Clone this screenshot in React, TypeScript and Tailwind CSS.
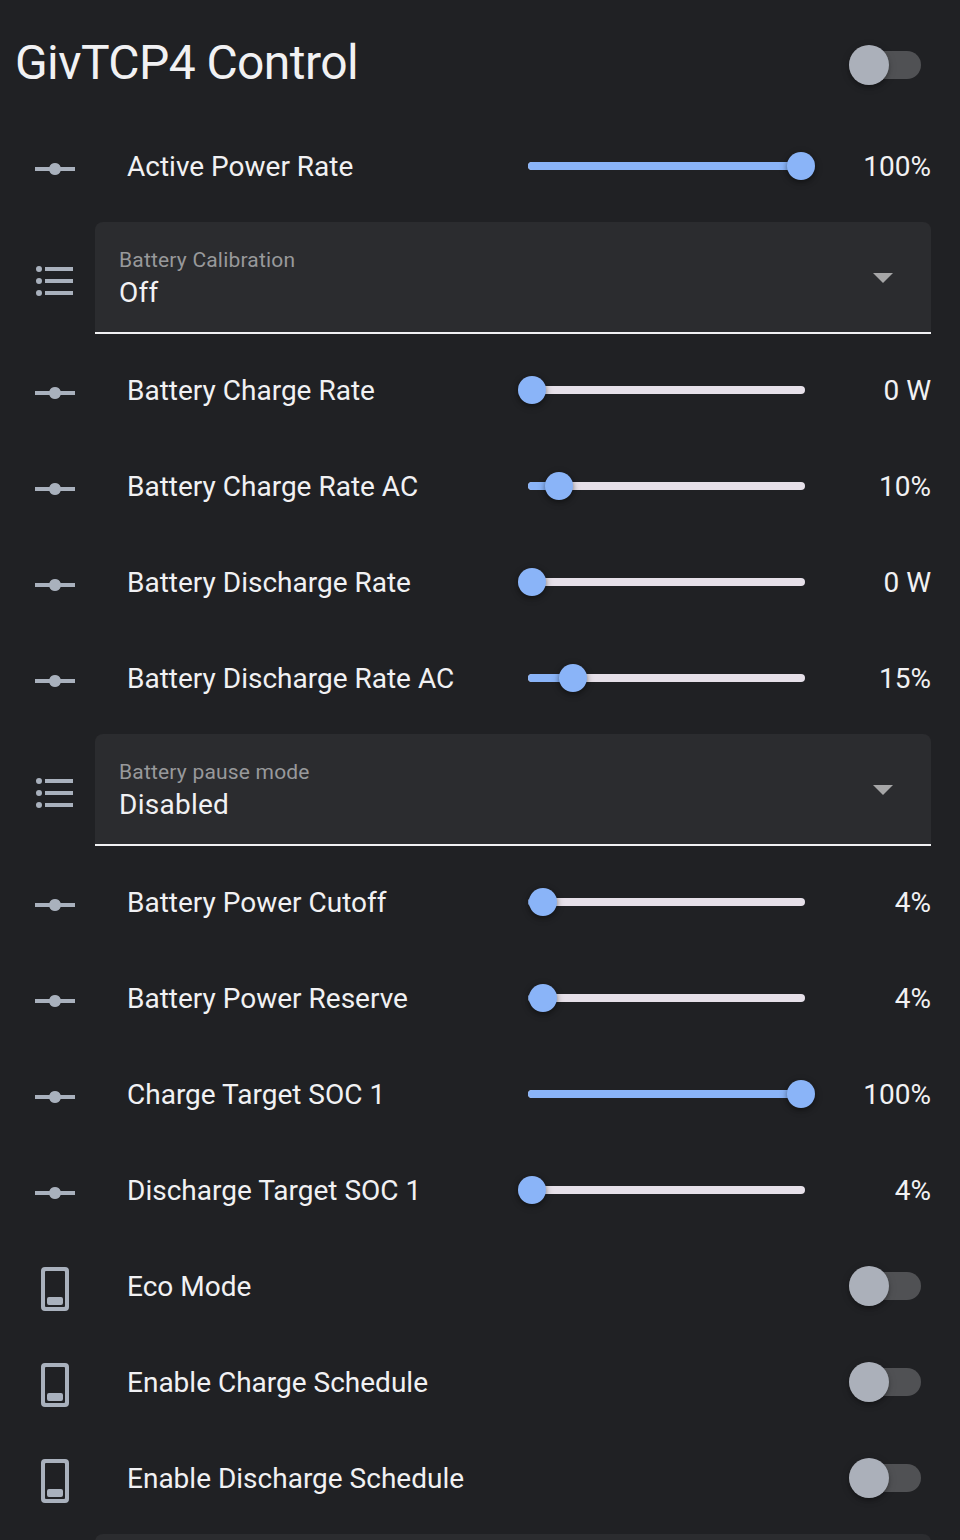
import type { ReactNode } from 'react';

type Row =
  | { kind: 'slider'; name: string; value: string; pos: number }
  | { kind: 'select'; name: string; value: string }
  | { kind: 'switch'; name: string };

const rows: Row[] = [
  { kind: 'slider', name: 'Active Power Rate', value: '100%', pos: 269 },
  { kind: 'select', name: 'Battery Calibration', value: 'Off' },
  { kind: 'slider', name: 'Battery Charge Rate', value: '0 W', pos: 0 },
  { kind: 'slider', name: 'Battery Charge Rate AC', value: '10%', pos: 27 },
  { kind: 'slider', name: 'Battery Discharge Rate', value: '0 W', pos: 0 },
  { kind: 'slider', name: 'Battery Discharge Rate AC', value: '15%', pos: 41 },
  { kind: 'select', name: 'Battery pause mode', value: 'Disabled' },
  { kind: 'slider', name: 'Battery Power Cutoff', value: '4%', pos: 11 },
  { kind: 'slider', name: 'Battery Power Reserve', value: '4%', pos: 11 },
  { kind: 'slider', name: 'Charge Target SOC 1', value: '100%', pos: 269 },
  { kind: 'slider', name: 'Discharge Target SOC 1', value: '4%', pos: 0 },
  { kind: 'switch', name: 'Eco Mode' },
  { kind: 'switch', name: 'Enable Charge Schedule' },
  { kind: 'switch', name: 'Enable Discharge Schedule' },
];

function Icon({ children }: { children: ReactNode }) {
  return (
    <svg viewBox="0 0 24 24" className="mt-1.5 size-12 shrink-0 fill-[#a9b1bd]">
      {children}
    </svg>
  );
}

function SliderIcon() {
  return (
    <Icon>
      <path d="M2 11h7.17a3 3 0 0 1 5.66 0H22v2h-7.17a3 3 0 0 1-5.66 0H2z" />
    </Icon>
  );
}

function ListIcon() {
  return (
    <Icon>
      <path d="M7 5h14v2H7V5m0 8v-2h14v2H7M4 4.5A1.5 1.5 0 0 1 5.5 6 1.5 1.5 0 0 1 4 7.5 1.5 1.5 0 0 1 2.5 6 1.5 1.5 0 0 1 4 4.5m0 6A1.5 1.5 0 0 1 5.5 12 1.5 1.5 0 0 1 4 13.5 1.5 1.5 0 0 1 2.5 12 1.5 1.5 0 0 1 4 10.5M7 19v-2h14v2H7m-3-2.5A1.5 1.5 0 0 1 5.5 18 1.5 1.5 0 0 1 4 19.5 1.5 1.5 0 0 1 2.5 18 1.5 1.5 0 0 1 4 16.5z" />
    </Icon>
  );
}

function SwitchIcon() {
  return (
    <Icon>
      <path
        fillRule="evenodd"
        d="M7 1h10a2 2 0 0 1 2 2v18a2 2 0 0 1-2 2H7a2 2 0 0 1-2-2V3a2 2 0 0 1 2-2M7.5 3a.5.5 0 0 0-.5.5v17a.5.5 0 0 0 .5.5h9a.5.5 0 0 0 .5-.5v-17a.5.5 0 0 0-.5-.5zM9 16h6a1 1 0 0 1 1 1v2a1 1 0 0 1-1 1H9a1 1 0 0 1-1-1v-2a1 1 0 0 1 1-1"
      />
    </Icon>
  );
}

function Toggle() {
  return (
    <div className="mr-2.5 flex h-7 w-[72px] shrink-0 items-center rounded-full bg-[#505154]">
      <div className="size-10 rounded-full bg-[#abb0ba] shadow-[0_4px_4px_-2px_rgba(0,0,0,0.2),0_2px_4px_rgba(0,0,0,0.14),0_2px_10px_rgba(0,0,0,0.12)]" />
    </div>
  );
}

function Slider({ pos }: { pos: number }) {
  return (
    <div className="relative h-2 w-[277px] overflow-visible rounded-full bg-[#e6e0e9]">
      <div className="h-2 rounded-l-full bg-[#8ab4f8]" style={{ width: pos + 4 }} />
      <div
        className="absolute -top-2.5 size-7 rounded-full bg-[#8ab4f8] shadow-[0_2px_4px_rgba(0,0,0,0.3),0_2px_6px_2px_rgba(0,0,0,0.15)]"
        style={{ left: pos - 10 }}
      />
    </div>
  );
}

function SliderRow({ name, value, pos }: { name: string; value: string; pos: number }) {
  return (
    <div className="flex h-20 items-center pr-[29px] pl-[31px]">
      <SliderIcon />
      <div className="ml-12 w-[401px] pt-0.5">{name}</div>
      <Slider pos={pos} />
      <div className="flex-1 pt-0.5 text-right">{value}</div>
    </div>
  );
}

function SelectRow({ name, value }: { name: string; value: string }) {
  return (
    <div className="flex h-28 shrink-0 items-center pr-[29px] pl-[31px]">
      <ListIcon />
      <div className="ml-4 flex h-28 flex-1 items-center justify-between rounded-t-lg border-b-2 border-[#f1f1f3] bg-[#2b2c2f] pt-0.5 pr-[38px] pl-6">
        <div>
          <div className="h-7 origin-left scale-75 leading-7 tracking-[0.26px] text-[#98999b]">{name}</div>
          <div className="h-9 leading-[38px] tracking-[0.26px]">{value}</div>
        </div>
        <svg viewBox="0 0 20 10" className="h-2.5 w-5 fill-[#a6a6a7]">
          <path d="M0 0h20L10 10z" />
        </svg>
      </div>
    </div>
  );
}

function SwitchRow({ name }: { name: string }) {
  return (
    <div className="flex h-20 items-center justify-between pr-[29px] pl-[31px]">
      <div className="flex items-center">
        <SwitchIcon />
        <div className="ml-12 pt-0.5">{name}</div>
      </div>
      <Toggle />
    </div>
  );
}

export default function App() {
  return (
    <main className="h-[1540px] w-[960px] overflow-hidden bg-[#202124] font-['Roboto',sans-serif] text-[28px] leading-10 text-[#f1f1f3]">
      <header className="flex h-[126px] items-center justify-between pt-1 pr-[29px] pl-[15px]">
        <h1 className="-mt-1 text-[48px] leading-[80px] tracking-[-0.576px]">GivTCP4 Control</h1>
        <Toggle />
      </header>
      <div className="flex flex-col gap-4">
        {rows.map((row) => {
          if (row.kind === 'slider') {
            return <SliderRow key={row.name} name={row.name} value={row.value} pos={row.pos} />;
          }
          if (row.kind === 'select') {
            return <SelectRow key={row.name} name={row.name} value={row.value} />;
          }
          return <SwitchRow key={row.name} name={row.name} />;
        })}
        <div className="mr-[29px] ml-[95px] h-28 rounded-t-lg bg-[#2b2c2f]" />
      </div>
    </main>
  );
}
